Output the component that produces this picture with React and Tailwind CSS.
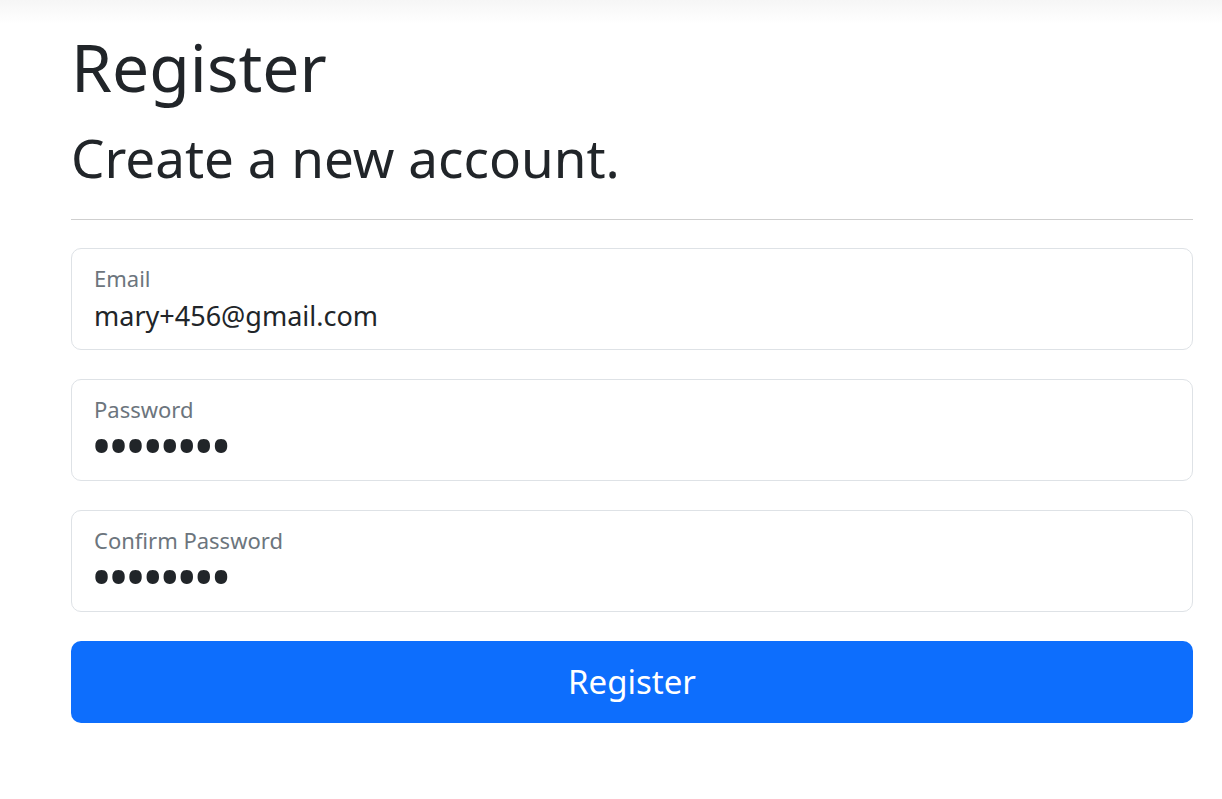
import React, { useState } from 'react';

function FloatingField({ label, type = 'text', value, onChange }) {
  const isPassword = type === 'password';
  return (
    <div className="relative h-[102px] rounded-[10px] border border-[#dee2e6] bg-white">
      <label className="absolute left-[22px] top-[18px] text-[22px] leading-none text-[#6c757d]">{label}</label>
      {isPassword ? (
        <input
          type="password"
          value={value}
          onChange={e => onChange(e.target.value)}
          className="absolute left-[19px] right-[23px] top-[47px] h-[36px] bg-transparent text-[56px] leading-none tracking-[-4px] text-[#212529] outline-none"
        />
      ) : (
        <input
          type={type}
          value={value}
          onChange={e => onChange(e.target.value)}
          className="absolute left-[22px] right-[23px] top-[48px] h-[36px] bg-transparent text-[27px] leading-none text-[#212529] outline-none"
        />
      )}
    </div>
  );
}

export default function App() {
  const [form, setForm] = useState({
    email: 'mary+456@gmail.com',
    password: 'password',
    confirm: 'password'
  });

  return (
    <div className="min-h-[799px] bg-white font-['Noto_Sans',sans-serif] text-[#212529]">
      <div className="h-[24px] bg-gradient-to-b from-[#f6f6f6] to-white" />
      <div className="ml-[71px] w-[1122px]">
        <h1 className="mt-[2px] text-[66px] leading-[80px]">Register</h1>
        <h2 className="mt-[17px] text-[53px] leading-[70px]">Create a new account.</h2>
        <hr className="mt-[26px] border-t border-[#cfcfcf]" />

        <form className="mt-[28px] flex flex-col gap-[29px]" onSubmit={e => e.preventDefault()}>
          <FloatingField label="Email" value={form.email} onChange={v => setForm({ ...form, email: v })} />
          <FloatingField label="Password" type="password" value={form.password} onChange={v => setForm({ ...form, password: v })} />
          <FloatingField label="Confirm Password" type="password" value={form.confirm} onChange={v => setForm({ ...form, confirm: v })} />
          <button
            type="submit"
            className="h-[82px] rounded-[10px] bg-[#0d6efd] text-[33px] text-white"
          >
            Register
          </button>
        </form>
      </div>
    </div>
  );
}
